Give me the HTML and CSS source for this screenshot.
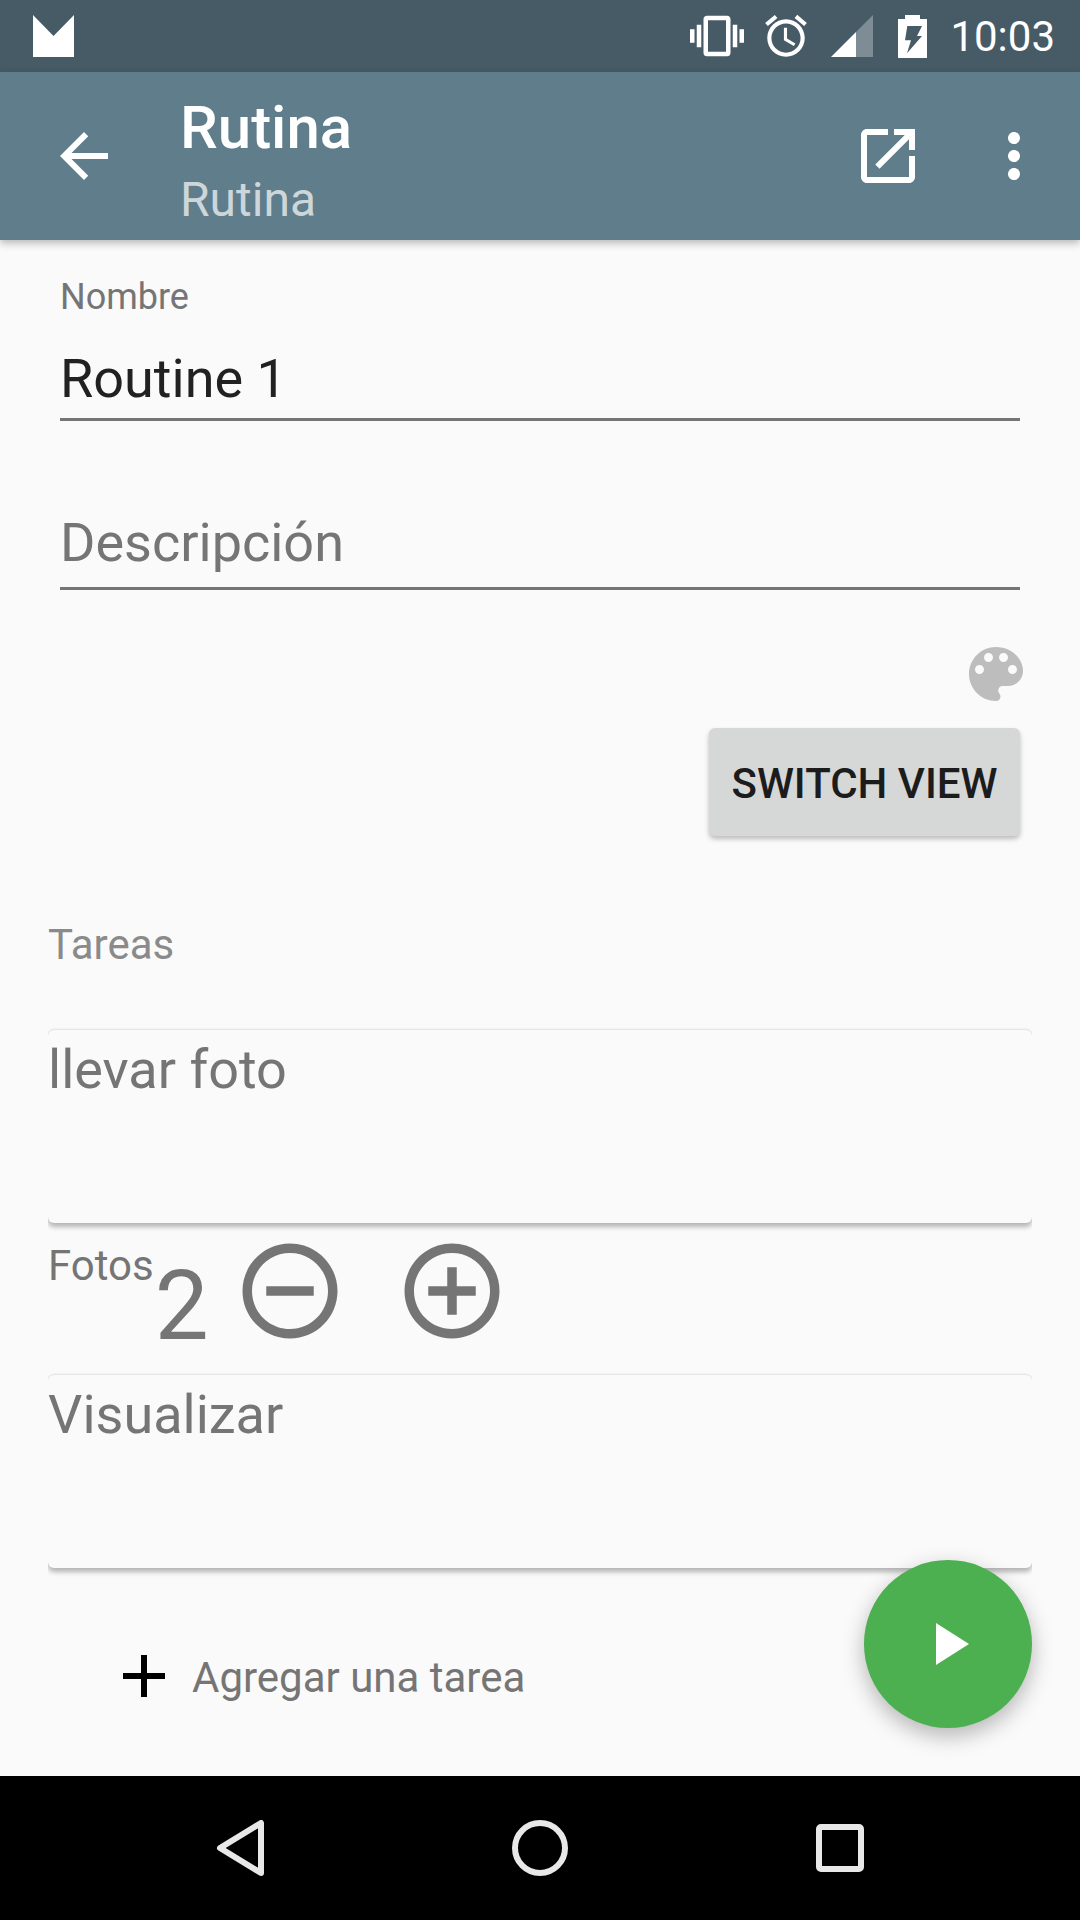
FILE: index.html
```html
<!DOCTYPE html>
<html lang="es">
<head>
    <meta charset="UTF-8">
    <meta name="viewport" content="width=device-width, initial-scale=1.0">
    <title>Rutina</title>
    <link rel="stylesheet" href="styles.css">
</head>
<body>
<div class="app">

    <div class="status-bar">
        <svg class="status-logo" viewBox="0 0 41 42"><polygon points="0,0 20.5,21 41,0 41,42 0,42" fill="#fff"/></svg>
        <div class="status-icons">
            <svg class="ic-vibrate" viewBox="0 0 24 24"><path fill="#fff" d="M0 15h2V9H0v6zm3 2h2V7H3v10zm19-8v6h2V9h-2zm-3 8h2V7h-2v10zM16.5 3h-9C6.67 3 6 3.67 6 4.5v15c0 .83.67 1.5 1.5 1.5h9c.83 0 1.5-.67 1.5-1.5v-15c0-.83-.67-1.5-1.5-1.5zM16 19H8V5h8v14z"/></svg>
            <svg class="ic-alarm" viewBox="0 0 24 24"><path fill="#fff" d="M22 5.72l-4.6-3.86-1.29 1.53 4.6 3.86L22 5.72zM7.88 3.39L6.6 1.86 2 5.71l1.29 1.53 4.59-3.85zM12.5 8H11v6l4.75 2.85.75-1.23-4-2.37V8zM12 4c-4.97 0-9 4.03-9 9s4.02 9 9 9c4.97 0 9-4.03 9-9s-4.03-9-9-9zm0 16c-3.87 0-7-3.13-7-7s3.13-7 7-7 7 3.13 7 7-3.13 7-7 7z"/></svg>
            <svg class="ic-signal" viewBox="0 0 42 42"><polygon points="42,0 42,42 25,42 25,17" fill="#fff" fill-opacity=".3"/><polygon points="25,17 25,42 0,42" fill="#fff"/></svg>
            <svg class="ic-battery" viewBox="0 0 29 43"><path fill="#fff" d="M7 0h15v4h7v39H0V4h7z"/><polygon points="9.3,11 24,11 19,21 24,21 9,38.3 13,25.3 7,25.3" fill="#475b67"/></svg>
            <span class="clock">10:03</span>
        </div>
    </div>

    <header class="toolbar">
        <svg class="tool-icon back" viewBox="0 0 24 24"><path fill="#fff" d="M20 11H7.83l5.59-5.59L12 4l-8 8 8 8 1.41-1.41L7.83 13H20v-2z"/></svg>
        <div class="titles">
            <div class="title">Rutina</div>
            <div class="subtitle">Rutina</div>
        </div>
        <svg class="tool-icon" viewBox="0 0 24 24"><path fill="#fff" d="M19 19H5V5h7V3H5c-1.11 0-2 .9-2 2v14c0 1.1.89 2 2 2h14c1.1 0 2-.9 2-2v-7h-2v7zM14 3v2h3.59l-9.83 9.83 1.41 1.41L19 6.41V10h2V3h-7z"/></svg>
        <svg class="tool-icon more" viewBox="0 0 24 24"><path fill="#fff" d="M12 8c1.1 0 2-.9 2-2s-.9-2-2-2-2 .9-2 2 .9 2 2 2zm0 2c-1.1 0-2 .9-2 2s.9 2 2 2 2-.9 2-2-.9-2-2-2zm0 6c-1.1 0-2 .9-2 2s.9 2 2 2 2-.9 2-2-.9-2-2-2z"/></svg>
    </header>

    <main class="content">
        <div class="field">
            <div class="field-label">Nombre</div>
            <div class="field-value">Routine 1</div>
        </div>
        <div class="field field-empty">
            <div class="field-value hint">Descripción</div>
        </div>

        <div class="color-row">
            <svg class="palette" viewBox="0 0 24 24"><path fill="#bdbdbd" d="M12 3c-4.97 0-9 4.03-9 9s4.03 9 9 9c.83 0 1.5-.67 1.5-1.5 0-.39-.15-.74-.39-1.01-.23-.26-.38-.61-.38-.99 0-.83.67-1.5 1.5-1.5H16c2.76 0 5-2.24 5-5 0-4.42-4.03-8-9-8zm-5.5 9c-.83 0-1.5-.67-1.5-1.5S5.67 9 6.5 9 8 9.67 8 10.5 7.33 12 6.5 12zm3-4C8.67 8 8 7.33 8 6.5S8.67 5 9.5 5s1.5.67 1.5 1.5S10.33 8 9.5 8zm5 0c-.83 0-1.5-.67-1.5-1.5S13.67 5 14.5 5s1.5.67 1.5 1.5S15.33 8 14.5 8zm3 4c-.83 0-1.5-.67-1.5-1.5S16.67 9 17.5 9s1.5.67 1.5 1.5-.67 1.5-1.5 1.5z"/></svg>
        </div>
        <div class="button-row">
            <button class="switch-btn">SWITCH VIEW</button>
        </div>

        <div class="tasks-label">Tareas</div>

        <div class="task-card">llevar foto</div>

        <div class="photo-row">
            <span class="photo-label">Fotos</span>
            <span class="photo-count">2</span>
            <svg class="stepper" viewBox="0 0 24 24"><path fill="#757575" d="M7 11v2h10v-2H7zm5-9C6.48 2 2 6.48 2 12s4.48 10 10 10 10-4.48 10-10S17.52 2 12 2zm0 18c-4.41 0-8-3.59-8-8s3.59-8 8-8 8 3.59 8 8-3.59 8-8 8z"/></svg>
            <svg class="stepper" viewBox="0 0 24 24"><path fill="#757575" d="M13 7h-2v4H7v2h4v4h2v-4h4v-2h-4V7zm-1-5C6.48 2 2 6.48 2 12s4.48 10 10 10 10-4.48 10-10S17.52 2 12 2zm0 18c-4.41 0-8-3.59-8-8s3.59-8 8-8 8 3.59 8 8-3.59 8-8 8z"/></svg>
        </div>

        <div class="task-card">Visualizar</div>

        <div class="add-row">
            <svg class="add-icon" viewBox="0 0 42 42"><path fill="#000" d="M18 0h6v18h18v6H24v18h-6V24H0v-6h18z"/></svg>
            <span class="add-text">Agregar una tarea</span>
        </div>

        <button class="fab">
            <svg class="play" viewBox="0 0 33 42"><polygon points="0,0 33,21 0,42" fill="#fff"/></svg>
        </button>
    </main>

    <nav class="nav-bar">
        <svg class="nav-icon" viewBox="0 0 56 56"><polygon points="8,28 49,3 49,53" fill="none" stroke="#e8e8e8" stroke-width="6" stroke-linejoin="round"/></svg>
        <svg class="nav-icon" viewBox="0 0 56 56"><circle cx="28" cy="28" r="25" fill="none" stroke="#e8e8e8" stroke-width="6"/></svg>
        <svg class="nav-icon" viewBox="0 0 56 56"><rect x="7" y="7" width="42" height="42" rx="2" fill="none" stroke="#e8e8e8" stroke-width="6"/></svg>
    </nav>

</div>
</body>
</html>
```

FILE: styles.css
```css
* { box-sizing: border-box; }
body { margin: 0; font-family: Roboto, "Noto Sans", sans-serif; background-color: #fafafa; }
.app { width: 1080px; height: 1920px; display: flex; flex-direction: column; overflow: hidden; }

/* status bar */
.status-bar { height: 72px; flex: none; background-color: #475b67; display: flex; align-items: center; justify-content: space-between; padding: 0 25px 0 33px; }
.status-logo { width: 41px; height: 42px; }
.status-icons { display: flex; align-items: center; color: #fff; }
.ic-vibrate { width: 54px; height: 54px; }
.ic-alarm { width: 50px; height: 50px; margin-left: 17px; }
.ic-signal { width: 42px; height: 42px; margin-left: 20px; }
.ic-battery { width: 29px; height: 43px; margin-left: 25px; }
.clock { font-size: 42px; margin-left: 23px; }

/* toolbar */
.toolbar { height: 168px; flex: none; background-color: #607d8b; display: flex; align-items: center; padding: 0 30px 0 48px; box-shadow: 0 3px 8px rgba(0, 0, 0, 0.28); position: relative; z-index: 2; }
.tool-icon { width: 72px; height: 72px; flex: none; }
.more { margin-left: 54px; }
.titles { flex: 1; margin-left: 60px; padding-top: 8px; }
.title { font-size: 60px; line-height: 70px; font-weight: 500; color: #fff; }
.subtitle { font-size: 48px; line-height: 56px; margin-top: 9px; color: rgba(255, 255, 255, 0.7); }

/* form */
.content { flex: 1; position: relative; padding: 0 48px; }
.field { margin: 33px 12px 0; border-bottom: 3px solid #757575; height: 148px; }
.field-empty { margin-top: 0; height: 169px; padding-top: 90px; }
.field-label { font-size: 36px; line-height: 48px; color: #757575; }
.field-value { font-size: 54px; line-height: 64px; margin-top: 26px; color: #212121; }
.field-value.hint { margin-top: 0; color: #757575; }

.color-row { display: flex; justify-content: flex-end; margin-top: 48px; padding-right: 0; }
.palette { width: 72px; height: 72px; display: block; }
.button-row { display: flex; justify-content: flex-end; margin-top: 18px; padding-right: 12px; }
.switch-btn { width: 311px; height: 108px; border: 0; border-radius: 6px; background-color: #d6d7d7; font-family: inherit; font-size: 42px; font-weight: 500; color: #1c1c1c; box-shadow: 0 3px 5px rgba(0, 0, 0, 0.25); padding: 2px 0 0; }

.tasks-label { font-size: 42px; line-height: 50px; margin-top: 84px; color: #8a8a8a; }

/* task cards */
.task-card { height: 193px; margin-top: 60px; border-radius: 6px; background-color: #fafafa; font-size: 54px; line-height: 64px; padding-top: 8px; color: #757575; box-shadow: 0 4px 5px rgba(0, 0, 0, 0.28), 0 -1px 2px rgba(0, 0, 0, 0.1); clip-path: inset(-3px 0 -12px 0); }
.photo-row { height: 152px; display: flex; align-items: flex-start; color: #757575; }
.photo-row + .task-card { margin-top: 0; }
.photo-label { font-size: 42px; line-height: 50px; margin-top: 18px; }
.photo-count { font-size: 96px; line-height: 112px; margin-top: 27px; margin-left: 1px; }
.stepper { width: 114px; height: 114px; margin-top: 11px; }
.photo-count + .stepper { margin-left: 24px; }
.stepper + .stepper { margin-left: 48px; }

.add-row { display: flex; align-items: center; margin-top: 85px; padding-left: 75px; }
.add-icon { width: 42px; height: 42px; flex: none; margin-bottom: 4px; }
.add-text { font-size: 42px; line-height: 50px; margin-left: 27px; color: #757575; }

.fab { position: absolute; right: 48px; bottom: 48px; width: 168px; height: 168px; border: 0; border-radius: 50%; background-color: #4caf50; box-shadow: 0 8px 22px rgba(0, 0, 0, 0.28); display: flex; align-items: center; justify-content: center; padding: 0; }
.play { width: 33px; height: 42px; margin-left: 8px; }

/* nav bar */
.nav-bar { height: 144px; flex: none; background-color: #000; display: flex; align-items: center; justify-content: center; gap: 244px; }
.nav-icon { width: 56px; height: 56px; }
```
